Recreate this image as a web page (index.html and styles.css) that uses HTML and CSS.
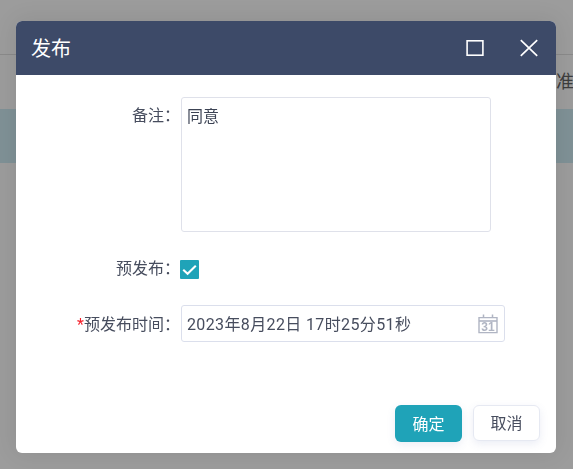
FILE: index.html
```html
<!DOCTYPE html>
<html lang="zh-CN">
<head>
<meta charset="utf-8">
<title>发布</title>
<link rel="stylesheet" href="styles.css">
</head>
<body>
<div class="page">
  <div class="page-top"></div>
  <div class="page-tabs"><span class="page-tab">准</span></div>
  <div class="page-band"></div>
</div>
<div class="mask">
  <section class="dialog">
    <header class="dialog-head">
      <h1 class="dialog-title">发布</h1>
      <div class="dialog-tools">
        <svg class="tool" viewBox="0 0 18 18" width="18" height="18"><rect x="1.1" y="1.8" width="15.8" height="14.4" fill="none" stroke="#fff" stroke-width="1.6"/></svg>
        <svg class="tool" viewBox="0 0 18 18" width="18" height="18"><path d="M0.8 1.2 L17.2 16.8 M17.2 1.2 L0.8 16.8" fill="none" stroke="#fff" stroke-width="1.7"/></svg>
      </div>
    </header>
    <form class="dialog-body">
      <div class="row row-note">
        <label class="label">备注：</label>
        <div class="textarea">同意</div>
      </div>
      <div class="row row-check">
        <label class="label">预发布：</label>
        <span class="check">
          <svg viewBox="0 0 20 20" width="19" height="19"><path d="M3.4 10.2 L8 14.5 L16.6 6" fill="none" stroke="#fff" stroke-width="2.2"/></svg>
        </span>
      </div>
      <div class="row row-date">
        <label class="label"><span class="req">*</span>预发布时间：</label>
        <div class="date">
          <span class="date-text">2023年8月22日 17时25分51秒</span>
          <svg class="cal" viewBox="0 0 20 20" width="20" height="20">
            <path d="M1 3.6 H19 V18.6 H1 Z" fill="none" stroke="#b0b5c3" stroke-width="1.4"/>
            <path d="M1 7 H19" stroke="#b0b5c3" stroke-width="1.6"/>
            <path d="M5.5 0.4 V3.6 M14.5 0.4 V3.6" stroke="#b0b5c3" stroke-width="1.5"/>
            <text x="10" y="17" class="cal-num">31</text>
          </svg>
        </div>
      </div>
    </form>
    <footer class="dialog-foot">
      <button type="button" class="btn btn-primary">确定</button>
      <button type="button" class="btn btn-plain">取消</button>
    </footer>
  </section>
</div>
</body>
</html>
```
FILE: styles.css
```css
* { box-sizing: border-box; }
html, body { margin: 0; height: 100%; overflow: hidden; }
body {
  font-family: Roboto, "Noto Sans CJK SC", sans-serif;
  background: #9c9c9c;
  color: #474d5e;
}
.page { height: 469px; }
.page-top { height: 55px; border-bottom: 1px solid #8a8a8a; }
.page-tabs { height: 54px; text-align: right; white-space: nowrap; overflow: hidden; }
.page-tab { display: inline-block; margin: 14px -1px 0 0; font-size: 18px; line-height: 26px; color: #3d3d3d; }
.page-band { height: 54px; background: #7f9196; }
.mask { position: fixed; inset: 0; display: block; padding: 21px 17px 16px 16px; }
.dialog {
  width: 540px; height: 432px;
  display: flex; flex-direction: column;
  background: #fff; border-radius: 6px;
  box-shadow: 0 0 24px rgba(0, 0, 0, .09);
  overflow: hidden;
}
.dialog-head {
  height: 54px; flex: none;
  display: flex; align-items: center; justify-content: space-between;
  padding: 0 18px 0 15px;
  background: #3d4a68; color: #fff;
}
.dialog-title { margin: 0; padding-top: 2px; font-size: 20px; font-weight: 400; line-height: 26px; }
.dialog-tools { display: flex; gap: 36px; }
.tool { display: block; }
.dialog-body { flex: 1; padding-top: 22px; }
.row { display: flex; }
.label { width: 164px; margin-right: 1px; flex: none; padding-top: 2px; text-align: right; font-size: 16px; line-height: 22px; white-space: nowrap; }
.req { color: #f5222d; }
.row-note { height: 135px; }
.row-note .label { padding-top: 8px; }
.textarea {
  width: 310px; height: 135px;
  border: 1px solid #dfe1ea; border-radius: 3px;
  padding: 7px 5px; font-size: 16px; line-height: 23px; color: #3c4354;
}
.row-check { margin-top: 25px; height: 22px; align-items: center; }
.check { width: 19px; height: 19px; margin: 2px 0 0 -1px; background: #1fa3b8; display: block; border-radius: 1px; }
.check svg { display: block; }
.row-date { margin-top: 26px; height: 37px; align-items: center; }
.date {
  width: 324px; height: 37px;
  display: flex; align-items: center; justify-content: space-between;
  border: 1px solid #dbdfec; border-radius: 3px;
  padding: 0 6px 0 5px;
}
.date-text { padding-top: 2px; font-size: 16px; line-height: 22px; letter-spacing: .37px; white-space: nowrap; color: #474d5e; }
.cal { display: block; }
.cal-num { font: 700 12px "Liberation Sans", sans-serif; fill: #b0b5c3; text-anchor: middle; }
.dialog-foot { flex: none; display: flex; justify-content: flex-end; gap: 11px; padding: 0 16px 11px 0; }
.btn {
  height: 37px; font: 400 16px/20px Roboto, "Noto Sans CJK SC", sans-serif;
  border-radius: 6px; padding: 2px 0 0; cursor: pointer;
  box-shadow: 0 3px 8px rgba(90, 110, 170, .12);
}
.btn-primary { width: 67px; background: #1fa3b8; border: 0; color: #fff; }
.btn-plain { width: 67px; height: 36px; background: #fff; border: 1px solid #e6e9f2; color: #474d5e; }
```
